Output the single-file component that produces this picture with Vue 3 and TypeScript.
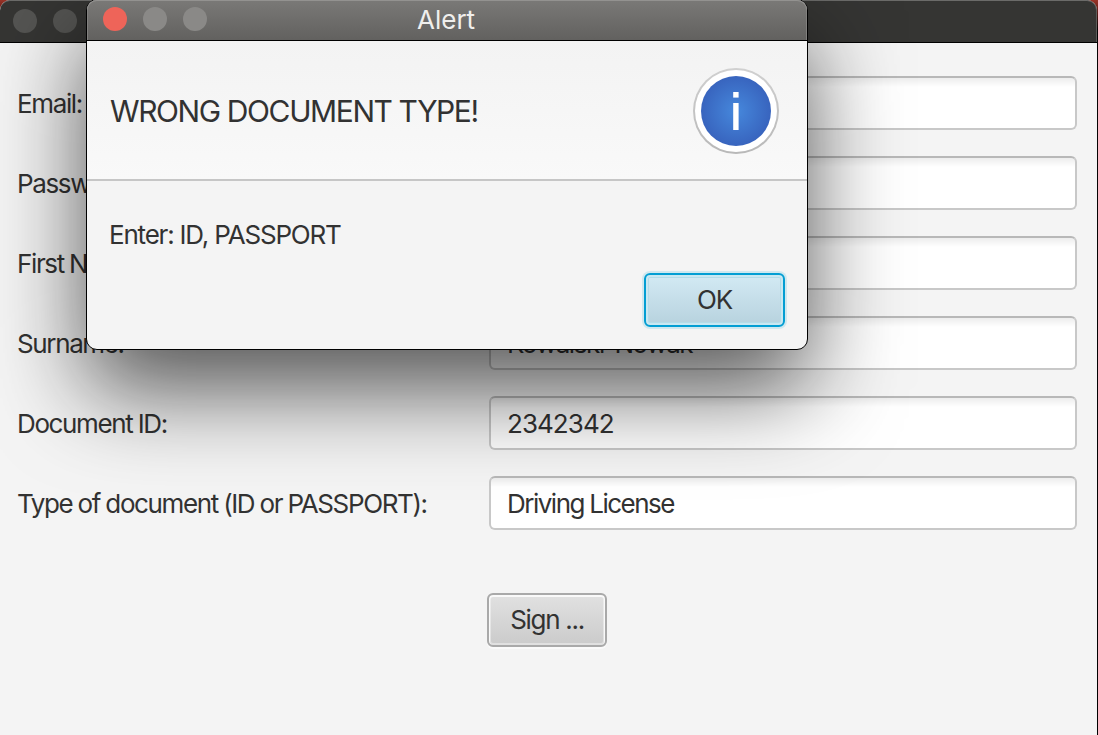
<script setup lang="ts">
interface Field {
  label: string
  value: string
  kind: string
}

const fields: Field[] = [
  { label: 'Email:', value: '', kind: 'email' },
  { label: 'Password:', value: '', kind: 'password' },
  { label: 'First Name:', value: '', kind: 'first' },
  { label: 'Surname:', value: 'Kowalski-Nowak', kind: 'surname' },
  { label: 'Document ID:', value: '2342342', kind: 'number' },
  { label: 'Type of document (ID or PASSPORT):', value: 'Driving License', kind: 'type' },
]
</script>

<template>
  <div class="screen">
    <main class="window">
      <header class="window-bar">
        <i class="light"></i>
        <i class="light"></i>
      </header>
      <form class="form" @submit.prevent>
        <div v-for="field in fields" :key="field.kind" class="row" :class="field.kind">
          <span class="label">{{ field.label }}</span>
          <span class="field">{{ field.value }}</span>
        </div>
        <button class="sign" type="submit">Sign ...</button>
      </form>
    </main>

    <section class="dialog" role="alertdialog">
      <header class="dialog-bar">
        <i class="light close"></i>
        <i class="light"></i>
        <i class="light"></i>
        <span class="title">Alert</span>
      </header>
      <div class="heading">
        <span class="message">WRONG DOCUMENT TYPE!</span>
        <svg class="info" width="88" height="88" viewBox="0 0 88 88">
          <defs>
            <radialGradient id="info-fill">
              <stop offset="0" stop-color="#4688dc" />
              <stop offset="1" stop-color="#3864be" />
            </radialGradient>
            <linearGradient id="info-rim" x1="0" y1="0" x2="0" y2="1">
              <stop offset="0" stop-color="#d0d0d0" />
              <stop offset="1" stop-color="#b8b8b8" />
            </linearGradient>
          </defs>
          <circle cx="44" cy="44" r="43" fill="url(#info-rim)" />
          <circle cx="44" cy="44" r="41" fill="#fff" />
          <circle cx="44" cy="44" r="35" fill="url(#info-fill)" />
          <rect x="41.2" y="25" width="5.4" height="5.6" fill="#fff" />
          <rect x="41.2" y="36" width="5.4" height="27" fill="#fff" />
        </svg>
      </div>
      <div class="body">
        <span class="detail">Enter: ID, PASSPORT</span>
        <button class="ok" type="button">OK</button>
      </div>
    </section>
  </div>
</template>

<style>
body {
  margin: 0;
  overflow: hidden;
}
</style>

<style scoped>
* {
  box-sizing: border-box;
}

.screen {
  position: relative;
  width: 1098px;
  height: 735px;
  overflow: hidden;
  background: linear-gradient(#9a3327 0, #5a1c18 12px, #050303 30px, #000 100%);
  color: #323232;
  font-family: Inter, "Liberation Sans", sans-serif;
  font-size: 26px;
  line-height: 32px;
  white-space: nowrap;
}

.window {
  width: 1097px;
  height: 735px;
  background: #f4f4f4;
  border-radius: 10px 10px 0 0;
  overflow: hidden;
}

.window-bar {
  display: flex;
  gap: 16px;
  height: 43px;
  padding: 9px 13px;
  background: #353533;
  border-bottom: 1px solid #000;
  border-radius: 10px 10px 0 0;
  box-shadow: inset 0 1px 0 #6b6b69, inset -1px 0 0 #5c5c5a;
}

.light {
  width: 24px;
  height: 24px;
  border-radius: 50%;
  background: #545452;
}

.form {
  padding: 33px 20px 0 17px;
}

.row {
  display: grid;
  grid-template-columns: 472px 588px;
  align-items: center;
  height: 54px;
  margin-bottom: 26px;
}

.label {
  padding-top: 2px;
  letter-spacing: -1.37px;
  word-spacing: -0.7px;
}

.field {
  display: flex;
  align-items: center;
  height: 54px;
  padding: 2px 0 0 16px;
  border: 2px solid #c8c8c8;
  border-top-color: #b8b8b8;
  border-radius: 6px;
  background: linear-gradient(#ededed 0, #fff 9px);
  letter-spacing: -1.5px;
  word-spacing: -0.6px;
}

.surname .field {
  letter-spacing: -1.4px;
}

.number .field {
  letter-spacing: -0.95px;
}

.sign {
  display: block;
  width: 120px;
  height: 54px;
  margin: 63px 0 0 470px;
  padding: 0;
  border: 2px solid #a9a9a9;
  border-radius: 6px;
  background: linear-gradient(#e1e1e1, #cbcbcb);
  box-shadow: inset 0 0 0 2px rgba(255, 255, 255, 0.4), inset 0 1px 0 1px #f5f5f5, 0 2px 0 #fafafa;
  color: #323232;
  font: inherit;
  letter-spacing: -1.3px;
}

.dialog {
  position: absolute;
  left: 86px;
  top: -1px;
  width: 722px;
  height: 351px;
  border: 1px solid #000;
  border-radius: 11px;
  background: #f4f4f4;
  box-shadow: 0 40px 92px rgba(0, 0, 0, 0.66);
}

.dialog-bar {
  display: flex;
  align-items: center;
  gap: 16px;
  position: relative;
  height: 41px;
  padding: 0 16px 2px;
  background: linear-gradient(#7a7977, #62615f);
  border-bottom: 1px solid #000;
  border-radius: 10px 10px 0 0;
  box-shadow: inset 0 1px 0 #939290, inset 1px 0 0 #81807e, inset -1px 0 0 #81807e;
}

.dialog-bar .light {
  background: #8a8987;
}

.dialog-bar .close {
  background: #ee6459;
}

.title {
  position: absolute;
  left: 330px;
  top: 4px;
  color: #f0efed;
}

.heading {
  display: flex;
  align-items: center;
  justify-content: space-between;
  height: 140px;
  padding: 2px 27px 0 23px;
  background: linear-gradient(#f3f3f3, #f9f9f9);
  border-bottom: 2px solid #c6c6c6;
}

.message {
  font-size: 30px;
  line-height: 36px;
  letter-spacing: -1.4px;
}

.info {
  display: block;
}

.body {
  display: flex;
  flex-direction: column;
  padding: 38px 22px 0;
}

.detail {
  letter-spacing: -1.2px;
}

.ok {
  align-self: flex-end;
  width: 141px;
  height: 54px;
  margin: 22px 0 0;
  padding: 0;
  border: 2px solid #039ed3;
  border-radius: 6px;
  background: linear-gradient(#d3eaf4, #b7d2de);
  box-shadow: 0 0 0 2px #cfe8ef, inset 0 0 0 2px #c9e8f2, inset 0 0 0 3px #b4dce8;
  color: #323232;
  font: inherit;
  letter-spacing: -1.2px;
}
</style>
